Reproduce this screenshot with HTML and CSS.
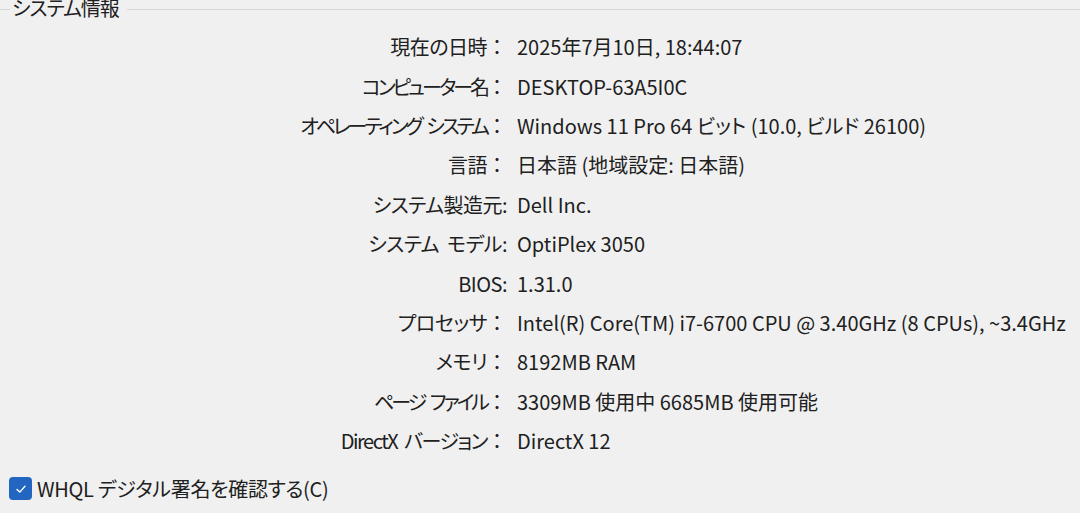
FILE: index.html
```html
<!DOCTYPE html>
<html lang="ja">
<head>
<meta charset="utf-8">
<link rel="stylesheet" href="styles.css">
</head>
<body>
<div class="panel">
  <div class="legend-row">
    <span class="legend-line short"></span>
    <span class="legend">システム情報</span>
    <span class="legend-line"></span>
  </div>
  <div class="info">
    <div class="label">現在の日時<span class="colon">：</span></div><div class="value">2025年7月10日, 18:44:07</div>
    <div class="label tight">コンピューター名<span class="colon">：</span></div><div class="value">DESKTOP-63A5I0C</div>
    <div class="label tight">オペレーティング システム<span class="colon">：</span></div><div class="value">Windows 11 Pro 64 ビット (10.0, ビルド 26100)</div>
    <div class="label">言語<span class="colon">：</span></div><div class="value">日本語 (地域設定: 日本語)</div>
    <div class="label">システム製造元:</div><div class="value">Dell Inc.</div>
    <div class="label">システム モデル:</div><div class="value">OptiPlex 3050</div>
    <div class="label">BIOS:</div><div class="value">1.31.0</div>
    <div class="label">プロセッサ<span class="colon">：</span></div><div class="value">Intel(R) Core(TM) i7-6700 CPU @ 3.40GHz (8 CPUs), ~3.4GHz</div>
    <div class="label">メモリ<span class="colon">：</span></div><div class="value">8192MB RAM</div>
    <div class="label tight">ページ ファイル<span class="colon">：</span></div><div class="value">3309MB 使用中 6685MB 使用可能</div>
    <div class="label mid">DirectX バージョン<span class="colon">：</span></div><div class="value">DirectX 12</div>
  </div>
  <label class="check">
    <span class="box"><svg width="14" height="14" viewBox="0 0 14 14"><path d="M3 7.4 L5.8 10.1 L11 4.3" fill="none" stroke="#fff" stroke-width="1.4" stroke-linecap="round" stroke-linejoin="round"/></svg></span>
    <span class="check-text">WHQL デジタル署名を確認する(C)</span>
  </label>
</div>
</body>
</html>
```
FILE: styles.css
```css
html, body {
  margin: 0;
  padding: 0;
  background: #f0f0f0;
  width: 1080px;
  height: 513px;
  overflow: hidden;
}
body {
  font-family: "Noto Sans CJK JP", "Noto Sans", sans-serif;
  font-feature-settings: "palt";
  color: #202020;
  font-size: 20px;
}
.panel {
  display: flex;
  flex-direction: column;
}
.legend-row {
  display: flex;
  align-items: center;
  height: 20px;
  margin-top: -2px;
}
.legend-line {
  flex: 1;
  height: 1px;
  background: #d8d8d8;
  margin-top: 3px;
}
.legend-line.short {
  flex: 0 0 10px;
}
.legend {
  font-size: 20px;
  letter-spacing: -1px;
  padding: 0 8px 0 2px;
  line-height: 20px;
}
.info {
  display: grid;
  grid-template-columns: 507px 1fr;
  grid-auto-rows: 39.4px;
  align-items: center;
  margin-top: 9px;
}
.label {
  text-align: right;
  white-space: nowrap;
  letter-spacing: -0.5px;
  word-spacing: 4px;
}
.label.tight {
  letter-spacing: -3px;
}
.label.mid {
  letter-spacing: -1.5px;
}
.colon {
  font-feature-settings: normal;
  letter-spacing: 0;
}
.value {
  padding-left: 10px;
  white-space: nowrap;
}
.check {
  display: flex;
  align-items: center;
  gap: 5px;
  margin-left: 9px;
  margin-top: 14px;
}
.box {
  width: 23px;
  height: 23px;
  border-radius: 4px;
  background: #2266c2;
  display: flex;
  align-items: center;
  justify-content: center;
}
.check-text {
  font-size: 20px;
  letter-spacing: -0.3px;
}
```
